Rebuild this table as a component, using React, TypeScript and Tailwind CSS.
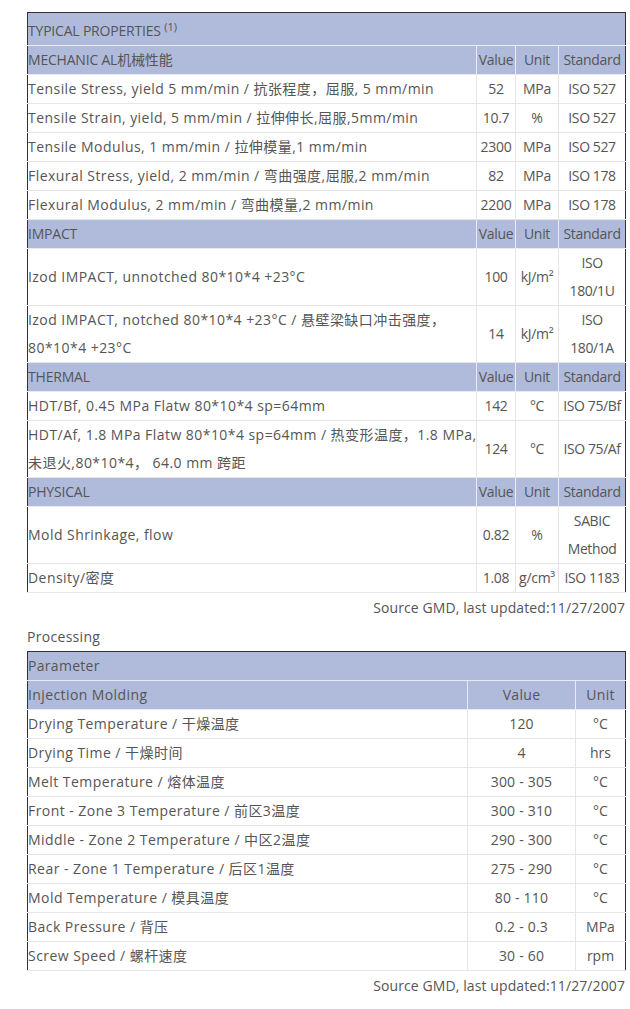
import React from "react";

const FONT = "font-['Open_Sans','Noto_Sans_CJK_SC',sans-serif]";

type Row = { name: React.ReactNode; value: string; unit: React.ReactNode; std: React.ReactNode; tall?: boolean };
type Section = { title: string; rows: Row[] };

const SECTIONS: Section[] = [
  {
    title: "MECHANIC AL机械性能",
    rows: [
      { name: "Tensile Stress, yield 5 mm/min / 抗张程度，屈服, 5 mm/min", value: "52", unit: "MPa", std: "ISO 527" },
      { name: "Tensile Strain, yield, 5 mm/min / 拉伸伸长,屈服,5mm/min", value: "10.7", unit: "%", std: "ISO 527" },
      { name: "Tensile Modulus, 1 mm/min / 拉伸模量,1 mm/min", value: "2300", unit: "MPa", std: "ISO 527" },
      { name: "Flexural Stress, yield, 2 mm/min / 弯曲强度,屈服,2 mm/min", value: "82", unit: "MPa", std: "ISO 178" },
      { name: "Flexural Modulus, 2 mm/min / 弯曲模量,2 mm/min", value: "2200", unit: "MPa", std: "ISO 178" },
    ],
  },
  {
    title: "IMPACT",
    rows: [
      { name: "Izod IMPACT, unnotched 80*10*4 +23°C", value: "100", unit: "kJ/m²", std: <>ISO<br />180/1U</>, tall: true },
      { name: <>Izod IMPACT, notched 80*10*4 +23°C / 悬壁梁缺口冲击强度，<br />80*10*4 +23°C</>, value: "14", unit: "kJ/m²", std: <>ISO<br />180/1A</>, tall: true },
    ],
  },
  {
    title: "THERMAL",
    rows: [
      { name: "HDT/Bf, 0.45 MPa Flatw 80*10*4 sp=64mm", value: "142", unit: "°C", std: "ISO 75/Bf" },
      { name: <>HDT/Af, 1.8 MPa Flatw 80*10*4 sp=64mm / 热变形温度，1.8 MPa,<br />未退火,80*10*4，&nbsp;64.0 mm 跨距</>, value: "124", unit: "°C", std: "ISO 75/Af", tall: true },
    ],
  },
  {
    title: "PHYSICAL",
    rows: [
      { name: "Mold Shrinkage, flow", value: "0.82", unit: "%", std: <>SABIC<br />Method</>, tall: true },
      { name: "Density/密度", value: "1.08", unit: "g/cm³", std: "ISO 1183" },
    ],
  },
];

const PROCESSING = [
  ["Drying Temperature / 干燥温度", "120", "°C"],
  ["Drying Time / 干燥时间", "4", "hrs"],
  ["Melt Temperature / 熔体温度", "300 - 305", "°C"],
  ["Front - Zone 3 Temperature / 前区3温度", "300 - 310", "°C"],
  ["Middle - Zone 2 Temperature / 中区2温度", "290 - 300", "°C"],
  ["Rear - Zone 1 Temperature / 后区1温度", "275 - 290", "°C"],
  ["Mold Temperature / 模具温度", "80 - 110", "°C"],
  ["Back Pressure / 背压", "0.2 - 0.3", "MPa"],
  ["Screw Speed / 螺杆速度", "30 - 60", "rpm"],
];

const head = "bg-[#b0bbdb] border-b border-[#e8ebf4]";
const cell = "border-b border-[#e6e6e6] p-0 align-middle";
const vline = "border-l border-[#e6e6e6]";
const hline = "border-l border-[#e8ebf4]";

export default function App() {
  return (
    <div className={`${FONT} text-[14px] leading-[28px] text-[#555] bg-white w-[630px] min-h-[1009px] pl-[27px] pr-[5px] pt-[12px]`}>
      <table className="w-[598px] table-fixed border-collapse border border-[#333]">
        <colgroup>
          <col className="w-[449px]" />
          <col className="w-[39px]" />
          <col className="w-[43px]" />
          <col className="w-[67px]" />
        </colgroup>
        <tbody>
          <tr className={`${head} h-[33px]`}>
            <td colSpan={4} className="p-0 pt-[4px] tracking-[-0.2px]">
              TYPICAL PROPERTIES <sup className="text-[11px] tracking-normal">(1)</sup>
            </td>
          </tr>
          {SECTIONS.map((s) => (
            <React.Fragment key={s.title}>
              <tr className={`${head} h-[29px]`}>
                <td className="p-0 whitespace-nowrap tracking-[-0.2px]">{s.title}</td>
                <td className={`${hline} p-0 text-center tracking-[-0.3px]`}>Value</td>
                <td className={`${hline} p-0 text-center tracking-[-0.3px]`}>Unit</td>
                <td className={`${hline} p-0 text-center tracking-[-0.3px]`}>Standard</td>
              </tr>
              {s.rows.map((r, i) => (
                <tr key={i} className={r.tall ? "h-[57px]" : "h-[29px]"}>
                  <td className={`${cell} whitespace-nowrap tracking-[0.45px]`}>{r.name}</td>
                  <td className={`${cell} ${vline} text-center tracking-[-0.3px]`}>{r.value}</td>
                  <td className={`${cell} ${vline} text-center whitespace-nowrap tracking-[-0.3px]`}>{r.unit}</td>
                  <td className={`${cell} ${vline} text-center whitespace-nowrap tracking-[-0.4px]`}>{r.std}</td>
                </tr>
              ))}
            </React.Fragment>
          ))}
        </tbody>
      </table>
      <div className="w-[598px] text-right h-[28px] mt-[1px] tracking-[0.1px]">Source GMD, last updated:11/27/2007</div>
      <div className="h-[28px] mt-[1px] tracking-[0.3px]">Processing</div>
      <table className="w-[598px] table-fixed border-collapse border border-[#333]">
        <colgroup>
          <col className="w-[440px]" />
          <col className="w-[108px]" />
          <col className="w-[50px]" />
        </colgroup>
        <tbody>
          <tr className={`${head} h-[29px]`}>
            <td colSpan={3} className="p-0 tracking-[0.3px]">Parameter</td>
          </tr>
          <tr className={`${head} h-[29px]`}>
            <td className="p-0 tracking-[0.4px]">Injection Molding</td>
            <td className={`${hline} p-0 text-center tracking-[0.3px]`}>Value</td>
            <td className={`${hline} p-0 text-center tracking-[0.3px]`}>Unit</td>
          </tr>
          {PROCESSING.map(([n, v, u]) => (
            <tr key={n} className="h-[29px]">
              <td className={`${cell} whitespace-nowrap tracking-[0.45px]`}>{n}</td>
              <td className={`${cell} ${vline} text-center tracking-[0.2px]`}>{v}</td>
              <td className={`${cell} ${vline} text-center`}>{u}</td>
            </tr>
          ))}
        </tbody>
      </table>
      <div className="w-[598px] text-right h-[28px] mt-[1px] tracking-[0.1px]">Source GMD, last updated:11/27/2007</div>
    </div>
  );
}
